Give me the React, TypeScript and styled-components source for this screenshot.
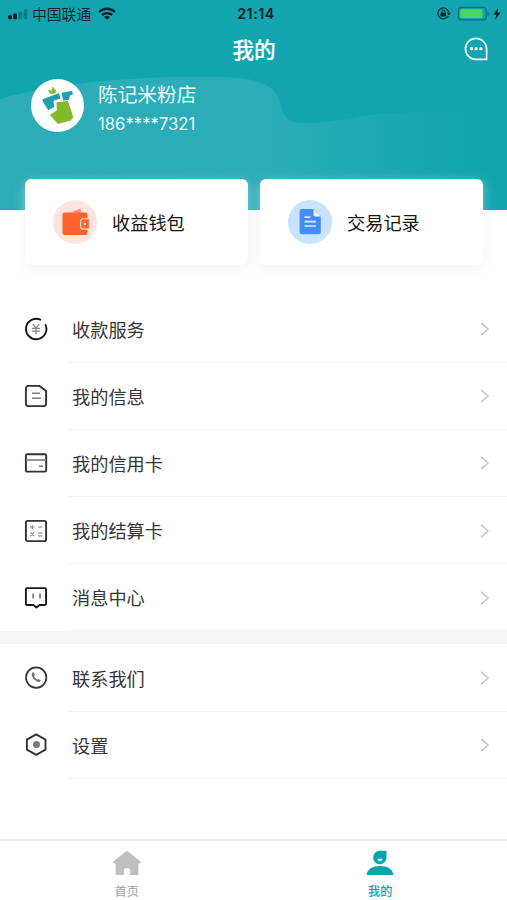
import React from "react";
import styled, { createGlobalStyle } from "styled-components";

const cjk = '"Noto Sans CJK SC", sans-serif';

const GlobalStyle = createGlobalStyle`
  * { box-sizing: border-box; }
  body { margin: 0; background: #fff; font-family: "Inter", ${cjk}; }
  svg { display: block; flex: none; }
`;

const Page = styled.main`
  display: flex;
  flex-direction: column;
  width: 507px;
  height: 900px;
  overflow: hidden;
  background: #fff;
`;

const Header = styled.header`
  position: relative;
  height: 210px;
  flex: none;
  background: #13a5af;
`;

const Wave = styled.svg`
  position: absolute;
  inset: 0;
`;

const HeaderContent = styled.div`
  position: relative;
`;

const StatusBar = styled.div`
  display: grid;
  grid-template-columns: 1fr auto 1fr;
  align-items: center;
  height: 28px;
  padding: 0 4px 0 8px;
  color: #06282d;
`;

const StatusGroup = styled.div<{ $end?: boolean }>`
  display: flex;
  align-items: center;
  justify-content: ${(p) => (p.$end ? "flex-end" : "flex-start")};
`;

const Carrier = styled.span`
  margin: 0 7px 0 4px;
  font: 400 14.8px/26px ${cjk};
`;

const Clock = styled.time`
  padding-left: 1px;
  font: 600 14.3px/28px "Inter", sans-serif;
  letter-spacing: 0.5px;
  color: #052226;
`;

const TitleBar = styled.div`
  display: grid;
  grid-template-columns: 1fr auto 1fr;
  align-items: center;
  height: 42px;
  padding: 0 19px 0 20px;
`;

const Title = styled.h1`
  grid-column: 2;
  margin: 0;
  font: 500 21.6px/42px ${cjk};
  -webkit-text-stroke: 0.2px #fff;
  color: #fff;
`;

const MessageButton = styled.button`
  justify-self: end;
  padding: 0;
  border: 0;
  background: none;
`;

const Profile = styled.section`
  display: flex;
  align-items: center;
  gap: 14px;
  height: 54px;
  margin: 8px 0 0 31px;
`;

const Avatar = styled.div`
  display: grid;
  place-items: center;
  width: 53px;
  height: 53px;
  border-radius: 50%;
  background: #fff;
`;

const Identity = styled.div`
  padding-top: 7px;
`;

const ShopName = styled.div`
  font: 400 19.7px/30px ${cjk};
  color: #e9fafb;
`;

const Phone = styled.div`
  font: 400 16.7px/30px "Inter", sans-serif;
  color: #e9fafb;
`;

const CardRow = styled.section`
  position: relative;
  display: flex;
  flex: none;
  gap: 12px;
  height: 86px;
  margin: -31px 24px 30.5px 25px;
`;

const Card = styled.a`
  display: flex;
  flex: 1;
  align-items: center;
  gap: 15px;
  padding-left: 28px;
  border-radius: 6px;
  background: #fff;
  box-shadow: 0 3px 12px rgba(228, 236, 240, 0.5);
  color: #161616;
  font: 400 18.2px/30px ${cjk};
`;

const IconDisc = styled.span<{ $color: string }>`
  display: grid;
  place-items: center;
  width: 44px;
  height: 44px;
  border-radius: 50%;
  background: ${(p) => p.$color};
`;

const Menu = styled.nav`
  flex: none;
`;

const MenuRow = styled.a`
  display: flex;
  height: 67.2px;
  padding-left: 24px;
`;

const MenuIcon = styled.span`
  display: flex;
  align-items: center;
  width: 43px;
`;

const MenuBody = styled.span`
  display: flex;
  flex: 1;
  align-items: center;
  justify-content: space-between;
  padding: 0 17px 0 5px;
  border-bottom: 1px solid #f3f3f3;
  color: #363636;
  font: 400 18.2px/30px ${cjk};
`;

const Divider = styled.div`
  flex: none;
  height: 13px;
  background: #f6f6f6;
`;

const TabBar = styled.nav`
  display: flex;
  height: 61px;
  margin-top: auto;
  border-top: 2px solid #ececec;
`;

const Tab = styled.a<{ $active?: boolean }>`
  display: flex;
  flex: 1;
  flex-direction: column;
  align-items: center;
  padding-top: 9px;
  gap: 6px;
  color: ${(p) => (p.$active ? "#08a4ad" : "#a0a0a0")};
  font: ${(p) => (p.$active ? 500 : 400)} 12.2px/18px ${cjk};
`;

const Chevron = () => (
  <svg width="10" height="17" viewBox="0 -1 10 17" fill="none" stroke="#c6c6c6" strokeWidth="1.6">
    <path d="M1.2 1.8 8 8l-6.8 6.2" />
  </svg>
);

const LineIcon = ({ children, color = "#333" }: { children: React.ReactNode; color?: string }) => (
  <svg width="24" height="24" viewBox="0 0 24 24" fill="none" stroke={color} strokeWidth="1.9" strokeLinejoin="round">
    {children}
  </svg>
);

const icons = {
  collect: (
    <LineIcon color="#171717">
      <path d="M17 3A10.2 10.2 0 1 0 21.2 7.2" />
      <path d="m8.8 7.2 3.2 4 3.2-4M8 11.3h8M8 14.2h8M12 11v6.6" stroke="#858585" strokeWidth="1.3" />
    </LineIcon>
  ),
  info: (
    <LineIcon>
      <path d="M4.5 1.9h11L22.1 7v12.5a2.6 2.6 0 0 1-2.6 2.6h-15a2.6 2.6 0 0 1-2.6-2.6v-15a2.6 2.6 0 0 1 2.6-2.6Z" />
      <path d="M8 9.3h8M8 14.3h9" stroke="#7c7c7c" strokeWidth="1.5" />
    </LineIcon>
  ),
  credit: (
    <LineIcon>
      <rect x="1.9" y="3.2" width="20.3" height="17.4" rx="1.2" />
      <path d="M2 9h20" stroke="#758782" strokeWidth="1.7" />
      <path d="M15 15.2h4" stroke="#666" strokeWidth="1.3" />
    </LineIcon>
  ),
  settle: (
    <LineIcon>
      <rect x="1.9" y="1.9" width="20.2" height="20.2" rx="1.6" />
      <path d="M6 8h4.5M8.2 5.8v4.5M14 8h4.5M6.4 13.4l3.6 3.8m0-3.8-3.6 3.8M14 14h4.5M14 17h4.5" stroke="#858585" strokeWidth="1.1" />
    </LineIcon>
  ),
  message: (
    <LineIcon color="#171717">
      <path d="M3.2 2.1h17.6q1.3 0 1.3 1.3v14.4q0 1.2-1.3 1.2h-5.2l-3.2 2.6-3-2.6H3.2q-1.3 0-1.3-1.2V3.4q0-1.3 1.3-1.3Z" />
      <path d="M9.2 7.6v4.8M16 7.6v4.8" stroke="#777" strokeWidth="1.7" />
    </LineIcon>
  ),
  phone: (
    <LineIcon>
      <circle cx="12.2" cy="11.6" r="10.2" strokeWidth="1.7" />
      <path d="M8.2 6.8c.7-.8 1.4-.6 1.8.1l1 1.9-.9 1.5c.8 1.4 1.8 2.3 3.2 3.1l1-.5 2 1.2c.5.5.3 1.2-.4 1.7-1 .6-2.6 0-3.9-.9-2-1.4-3.5-3-4.1-5.2-.3-1.2-.2-2.2.3-2.9Z" fill="#777" stroke="none" />
    </LineIcon>
  ),
  settings: (
    <LineIcon>
      <path d="m12.2 1.3 9.3 5.3v10l-9.3 5.3-9.3-5.3v-10Z" />
      <circle cx="12.5" cy="11.4" r="3.5" fill="#7a7a7a" stroke="none" />
    </LineIcon>
  ),
};

type IconName = keyof typeof icons;

const Item = ({ icon, label }: { icon: IconName; label: string }) => (
  <MenuRow>
    <MenuIcon>{icons[icon]}</MenuIcon>
    <MenuBody>
      {label}
      <Chevron />
    </MenuBody>
  </MenuRow>
);

const mainItems: [IconName, string][] = [
  ["collect", "收款服务"],
  ["info", "我的信息"],
  ["credit", "我的信用卡"],
  ["settle", "我的结算卡"],
  ["message", "消息中心"],
];

const Signal = () => (
  <svg width="20" height="12" viewBox="0 0 20 12" fill="#052024">
    <rect y="7.3" width="3.8" height="4" rx="1" />
    <rect x="5.2" y="5.5" width="3.8" height="5.8" rx="1" />
    <rect x="10.6" y="3.5" width="3.6" height="7.8" rx="1" fill="#0d7c87" />
    <rect x="15.7" y="1.3" width="3.6" height="10" rx="1" fill="#0d7c87" />
  </svg>
);

const Wifi = () => (
  <svg width="18" height="15" viewBox="0 0 18 15" fill="none" stroke="#052024" strokeWidth="2.4">
    <path d="M1.1 5C5.5.7 12.5.7 16.9 5M4 8.1c2.8-2.7 7.2-2.7 10 0" />
    <path d="M9 12.8 6.2 10a4 4 0 0 1 5.6 0Z" fill="#052024" stroke="none" />
  </svg>
);

const StatusIcons = () => (
  <svg width="66" height="18" viewBox="0 0 66 18" fill="none">
    <path d="M11.2 11A5.5 5.5 0 1 1 11.7 7" stroke="#06343a" strokeWidth="1.3" />
    <path d="m9.8 7.4 4 .2-1.8 3.2Z" fill="#06343a" />
    <rect x="3.5" y="7.4" width="5.6" height="4.2" rx=".5" fill="#06282d" />
    <path d="M4.8 7.6V6.5a1.5 1.5 0 0 1 3 0v1.1" stroke="#06282d" />
    <rect x="21.4" y="2.3" width="27.8" height="12.6" rx="3" stroke="#08717a" strokeWidth="1.3" />
    <rect x="23.4" y="4.2" width="22" height="8.8" rx="1.3" fill="#4bd861" />
    <path d="M50.5 6.6q1.6.2 1.6 2.1t-1.6 2.1Z" fill="#08717a" />
    <path d="m61.2 2.8-4.9 7h3.1l-1.2 5 5.4-7.2h-3.3Z" fill="#052024" />
  </svg>
);

const Bubble = () => (
  <svg width="24" height="24" viewBox="0 0 24 24" fill="none" stroke="#f2ffff" strokeWidth="1.7">
    <path d="M12 1.4A10.5 10.5 0 0 0 12 22.4h10.6V12A10.6 10.6 0 0 0 12 1.4Z" strokeLinejoin="round" />
    <g fill="#fff" stroke="none">
      <rect x="6" y="10.2" width="3" height="3" rx=".8" />
      <rect x="10.7" y="10.2" width="3" height="3" rx=".8" />
      <rect x="15.4" y="10.2" width="3" height="3" rx=".8" />
    </g>
  </svg>
);

const ShopLogo = () => (
  <svg width="53" height="53" viewBox="2 2 49 49" strokeLinejoin="round" strokeWidth="1">
    <path d="m18 12.4 3.4.4.6-3.4 3 3.5-.6 2.2-4.5.6Z" fill="#86b82c" stroke="#86b82c" strokeWidth=".5" />
    <path d="m13 21.2 14.6-5.6.9 4.1-5.2 1.8q-1.3.6-1 2l.7 4.2-4.9 2.5-4.2-6.7Z" fill="#1da1ad" stroke="#1da1ad" />
    <path d="m31 15 8.8-1.4.3 2.6-2.8.9-.4 3.5-4.9.7Z" fill="#1da1ad" stroke="#1da1ad" />
    <path d="m26 24.1 9.8-1.3 4.8 14.4-2.2 2.8-11.4 2.9-6.8-7.6 6.2-4.1Z" fill="#86b82c" stroke="#86b82c" />
  </svg>
);

const Wallet = () => (
  <svg width="30" height="28" viewBox="0 0 30 28">
    <path d="m10.5 4.4 9.7-4 1.2 4.7Z" fill="#ff8993" />
    <rect x="2.5" y="4.6" width="25" height="22.3" rx="2" fill="#fd632d" />
    <path d="M29.4 10.7h-5.9q-2.9 0-2.9 2.7v5q0 2.7 2.9 2.7h5.9Z" fill="#fd632d" stroke="#ffdacd" strokeWidth="1.1" />
    <circle cx="24.9" cy="16" r="1.3" fill="#ffe6dc" />
  </svg>
);

const Document = () => (
  <svg width="24" height="28" viewBox="0 0 24 28">
    <path d="M3.7 1h11.8l7.3 7.2v16q0 2.1-2 2.1H3.7q-2.1 0-2.1-2.1V3.1Q1.6 1 3.7 1Z" fill="#438df5" />
    <path d="M15.5 1.3v5.4q0 1.8 1.8 1.8h5.5Z" fill="#edf7ff" />
    <path d="M6.5 9.2h5.8M6.5 13.7h11.4M6.5 18h11.4" stroke="#d7ecff" strokeWidth="1.7" />
  </svg>
);

const Home = () => (
  <svg width="28" height="26" viewBox="0 0 28 26" fill="#bfbfbf">
    <path d="M12.8 1.4q1.2-1 2.4 0L27 11.1q1 1 .6 1.7-.3.6-1.4.6h-.8v10.2q0 1.5-1.5 1.5h-6.7v-3.9a3.2 3.2 0 0 0-6.4 0v3.9H4.1q-1.5 0-1.5-1.5V13.4h-.8q-1.1 0-1.4-.6-.4-.7.6-1.7Z" />
  </svg>
);

const Person = () => (
  <svg width="28" height="26" viewBox="0 0 28 26" fill="#08a4ad">
    <path d="M13.8.8h6.7v7A6.7 6.7 0 1 1 13.8.8ZM.5 25c.8-6 6.2-9 13.5-9s12.7 3 13.5 9Z" />
    <path d="M11.2 8.7h5.5q-.5 2.2-2.8 2.2t-2.7-2.2Z" fill="#fff" />
  </svg>
);

export default function App() {
  return (
    <>
      <GlobalStyle />
      <Page>
        <Header>
          <Wave width="507" height="210" viewBox="0 0 507 210">
            <defs>
              <linearGradient id="wave" x1="0" x2="1">
                <stop offset="0" stopColor="#2cacb7" />
                <stop offset=".5" stopColor="#2badb8" />
                <stop offset=".93" stopColor="#13a5af" />
              </linearGradient>
            </defs>
            <path d="M0 99C55 82 151 75 223 77c36 1 53 8 58 28 2 13 8 18 21 18 29 1 60-9 90-10 42-1 83-1 115 0v97H0Z" fill="url(#wave)" />
          </Wave>
          <HeaderContent>
            <StatusBar>
              <StatusGroup>
                <Signal />
                <Carrier>中国联通</Carrier>
                <Wifi />
              </StatusGroup>
              <Clock>21:14</Clock>
              <StatusGroup $end>
                <StatusIcons />
              </StatusGroup>
            </StatusBar>
            <TitleBar>
              <Title>我的</Title>
              <MessageButton aria-label="消息">
                <Bubble />
              </MessageButton>
            </TitleBar>
            <Profile>
              <Avatar>
                <ShopLogo />
              </Avatar>
              <Identity>
                <ShopName>陈记米粉店</ShopName>
                <Phone>186****7321</Phone>
              </Identity>
            </Profile>
          </HeaderContent>
        </Header>
        <CardRow>
          <Card>
            <IconDisc $color="#ffe5df">
              <Wallet />
            </IconDisc>
            收益钱包
          </Card>
          <Card>
            <IconDisc $color="#c9e3fc">
              <Document />
            </IconDisc>
            交易记录
          </Card>
        </CardRow>
        <Menu>
          {mainItems.map(([icon, label]) => (
            <Item key={icon} icon={icon} label={label} />
          ))}
        </Menu>
        <Divider />
        <Menu>
          <Item icon="phone" label="联系我们" />
          <Item icon="settings" label="设置" />
        </Menu>
        <TabBar>
          <Tab>
            <Home />
            首页
          </Tab>
          <Tab $active>
            <Person />
            我的
          </Tab>
        </TabBar>
      </Page>
    </>
  );
}
